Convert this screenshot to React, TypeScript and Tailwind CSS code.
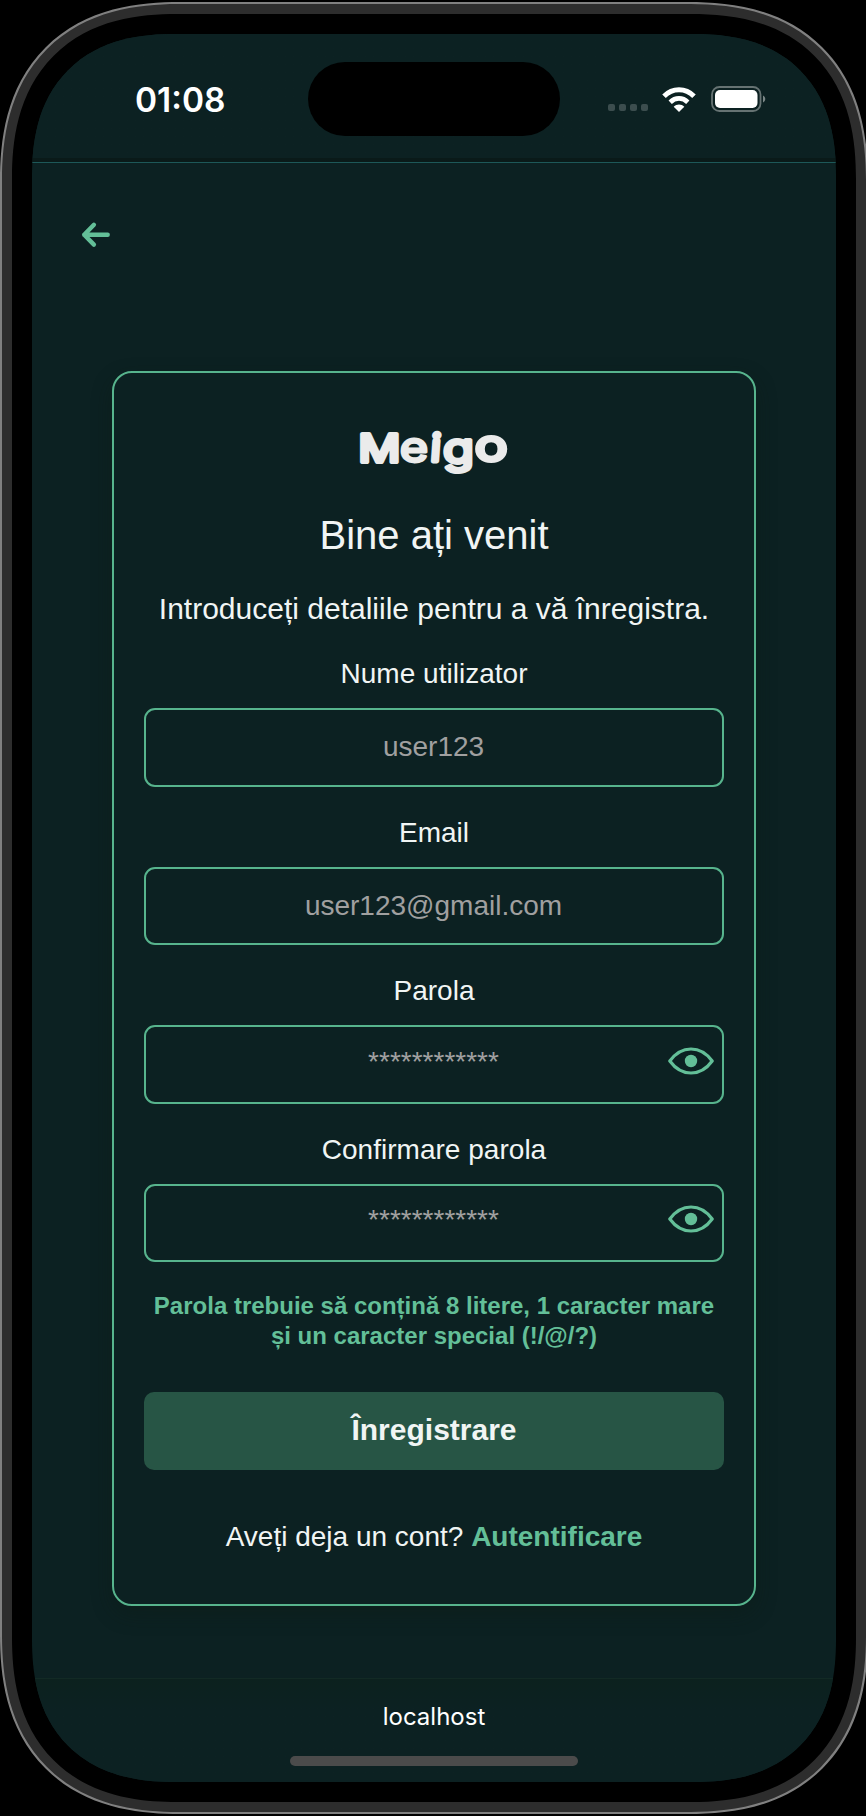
import React from "react";

function Eye() {
  return (
    <svg viewBox="0 0 46 28" className="h-7 w-[46px]" fill="none">
      <path d="M1.800 14C13.500 -2 32.500 -2 44.200 14C32.500 30 13.500 30 1.800 14Z" stroke="#63bf98" strokeWidth="3.2" strokeLinejoin="round" />
      <circle cx="23" cy="14" r="6.2" fill="#63bf98" />
    </svg>
  );
}

function Logo() {
  return (
    <svg viewBox="0 0 150 54" className="h-[54px] w-[150px] overflow-visible" aria-label="Meigo">
      <g
        fill="#ebebeb"
        stroke="#ebebeb"
        strokeLinejoin="round"
        strokeLinecap="round"
        fontFamily="Inter, 'Liberation Sans', sans-serif"
        fontWeight="400"
      >
        <text transform="translate(-0.5 37.2) scale(1.2 1)" fontSize="38.5" strokeWidth="4.2">M</text>
        <text transform="translate(40.8 37.4) scale(1.16 1)" fontSize="42" strokeWidth="2.8">e</text>
        <text transform="translate(71.5 36.2) skewX(-4)" fontSize="37" strokeWidth="5">i</text>
        <text transform="translate(84 38.4) scale(1.2 1)" fontSize="42" strokeWidth="3.8">g</text>
        <text transform="translate(115.8 35.8) scale(1.26 1)" fontSize="43.5" strokeWidth="3.8">o</text>
      </g>
    </svg>
  );
}

function Field({ label, placeholder, secret = false }: { label: string; placeholder: string; secret?: boolean }) {
  return (
    <label className="flex w-full flex-col items-center">
      <span className="h-8 text-[28px] leading-8 tracking-[0.02px] text-[#f1f5f4]">{label}</span>
      <span className="mt-[18px] flex h-[78.500px] w-full items-center rounded-[11px] border-2 border-[#57b48d] pr-2">
        <input
          className={
            secret
              ? "h-full min-w-0 flex-1 bg-transparent pb-[5px] pl-[53px] text-center text-[28px] text-white outline-none placeholder:text-[#a0a0a0]"
              : "h-full min-w-0 flex-1 bg-transparent pl-[7px] text-center text-[28px] text-white outline-none placeholder:text-[#a0a0a0]"
          }
          placeholder={placeholder}
        />
        {secret && <button className="mb-[7px]"><Eye /></button>}
      </span>
    </label>
  );
}

export default function App() {
  return (
    <div className="h-[1816px] w-[866px] overflow-hidden bg-black pt-[2px] font-['Liberation_Sans',Arial,sans-serif]">
      <div className="h-[1812px] w-[868px] rounded-[150px] border-2 border-[#808080] bg-[#2d2d2d] p-[10px] supports-[corner-shape:squircle]:rounded-[180px] supports-[corner-shape:squircle]:[corner-shape:superellipse(1.25)]">
        <div className="h-full rounded-[140px] bg-black p-5 supports-[corner-shape:squircle]:rounded-[165px] supports-[corner-shape:squircle]:[corner-shape:superellipse(1.25)]">
          <div className="flex h-full flex-col overflow-hidden rounded-[124px] bg-[#0c2122] supports-[corner-shape:squircle]:rounded-[143px] supports-[corner-shape:squircle]:[corner-shape:superellipse(1.25)]">
            <header className="flex h-[129px] shrink-0 items-start border-b border-[#1d5858] bg-linear-to-b from-[#0c2122] from-97% to-[#0a1a19] to-97%">
              <time className="mt-[45px] ml-[103px] w-[173px] font-[Inter,sans-serif] text-[33.500px] leading-[42px] font-semibold text-white">01:08</time>
              <div className="mt-7 h-[74px] w-[252px] rounded-full bg-black" />
              <div className="mt-[52px] ml-12 flex h-[26px] items-center">
                <div className="mt-[17px] flex gap-1">
                  <i className="size-[7px] rounded-[2px] bg-[#3c4d4e]" />
                  <i className="size-[7px] rounded-[2px] bg-[#3c4d4e]" />
                  <i className="size-[7px] rounded-[2px] bg-[#3c4d4e]" />
                  <i className="size-[7px] rounded-[2px] bg-[#3c4d4e]" />
                </div>
                <svg viewBox="0 0 34 25" className="ml-[14px] h-[25px] w-[34px]" fill="none" stroke="#fff">
                  <path d="M2 9.3C10.5 .7 23.500.7 32 9.3" strokeWidth="5" />
                  <path d="M8.200 15.200C13.300 10.200 20.700 10.200 25.800 15.200" strokeWidth="4.700" />
                  <path d="M17 25L11.700 19.700C14.700 16.700 19.300 16.700 22.300 19.700Z" fill="#fff" stroke="none" />
                </svg>
                <svg viewBox="0 0 55 26" className="ml-[15px] h-[26px] w-[55px]" fill="none">
                  <rect x="1" y="1" width="48.500" height="24" rx="7.500" stroke="#667373" strokeWidth="1.800" />
                  <rect x="4" y="4" width="42.500" height="18" rx="5" fill="#fff" />
                  <path d="M52 9.500C55 11 55 15 52 16.500Z" fill="#7b8787" />
                </svg>
              </div>
            </header>

            <main className="flex h-[1515px] shrink-0 flex-col items-center">
              <button className="mt-[58px] ml-[49px] self-start">
                <svg viewBox="0 0 30 28" className="h-7 w-[30px]" fill="none" stroke="#63bf98" strokeWidth="4.400" strokeLinecap="round" strokeLinejoin="round">
                  <path d="M12.900 3.800L3.200 13.700L12.900 23.600M3.200 13.700H26.700" />
                </svg>
              </button>
              <form className="mt-[122px] flex h-[1235px] w-[644px] flex-col items-center rounded-[20px] border-2 border-[#57b48d] bg-[#0c2122] px-[30px] shadow-[0_8px_20px_rgba(12,28,20,0.4)]">
                <div className="mt-[52px] h-[50px]"><Logo /></div>
                <h1 className="mt-[37px] text-[40px] leading-[46px] text-[#f1f5f4]">Bine ați venit</h1>
                <p className="mt-[34px] text-[30px] leading-[34px] whitespace-nowrap text-[#f1f5f4]">Introduceți detaliile pentru a vă înregistra.</p>
                <div className="mt-[32px] flex w-full flex-col gap-[30px]">
                  <Field label="Nume utilizator" placeholder="user123" />
                  <Field label="Email" placeholder="user123@gmail.com" />
                  <Field label="Parola" placeholder="************" secret />
                  <Field label="Confirmare parola" placeholder="************" secret />
                </div>
                <p className="mt-[29px] text-center text-[24px] leading-[30px] font-bold text-[#63bf98]">
                  Parola trebuie să conțină 8 litere, 1 caracter mare
                  <br />
                  și un caracter special (!/@/?)
                </p>
                <button className="mt-[41px] h-[78px] w-full shrink-0 rounded-[10px] bg-[#275545] pb-[3px] text-[30px] font-bold text-[#f1f5f4]">Înregistrare</button>
                <p className="mt-[51px] text-[28px] leading-8 text-[#f1f5f4]">
                  Aveți deja un cont? <a className="font-bold text-[#63bf98]">Autentificare</a>
                </p>
              </form>
            </main>

            <footer className="flex flex-1 flex-col items-center border-t border-[#122a25] bg-linear-to-b from-[#0c211e] to-[#0c2122] to-30%">
              <span className="mt-[22px] font-[Inter,sans-serif] text-[24px] leading-[32px] text-white">localhost</span>
              <div className="mt-[23px] h-[10px] w-72 rounded-full bg-[#4b4b4b]" />
            </footer>
          </div>
        </div>
      </div>
    </div>
  );
}
